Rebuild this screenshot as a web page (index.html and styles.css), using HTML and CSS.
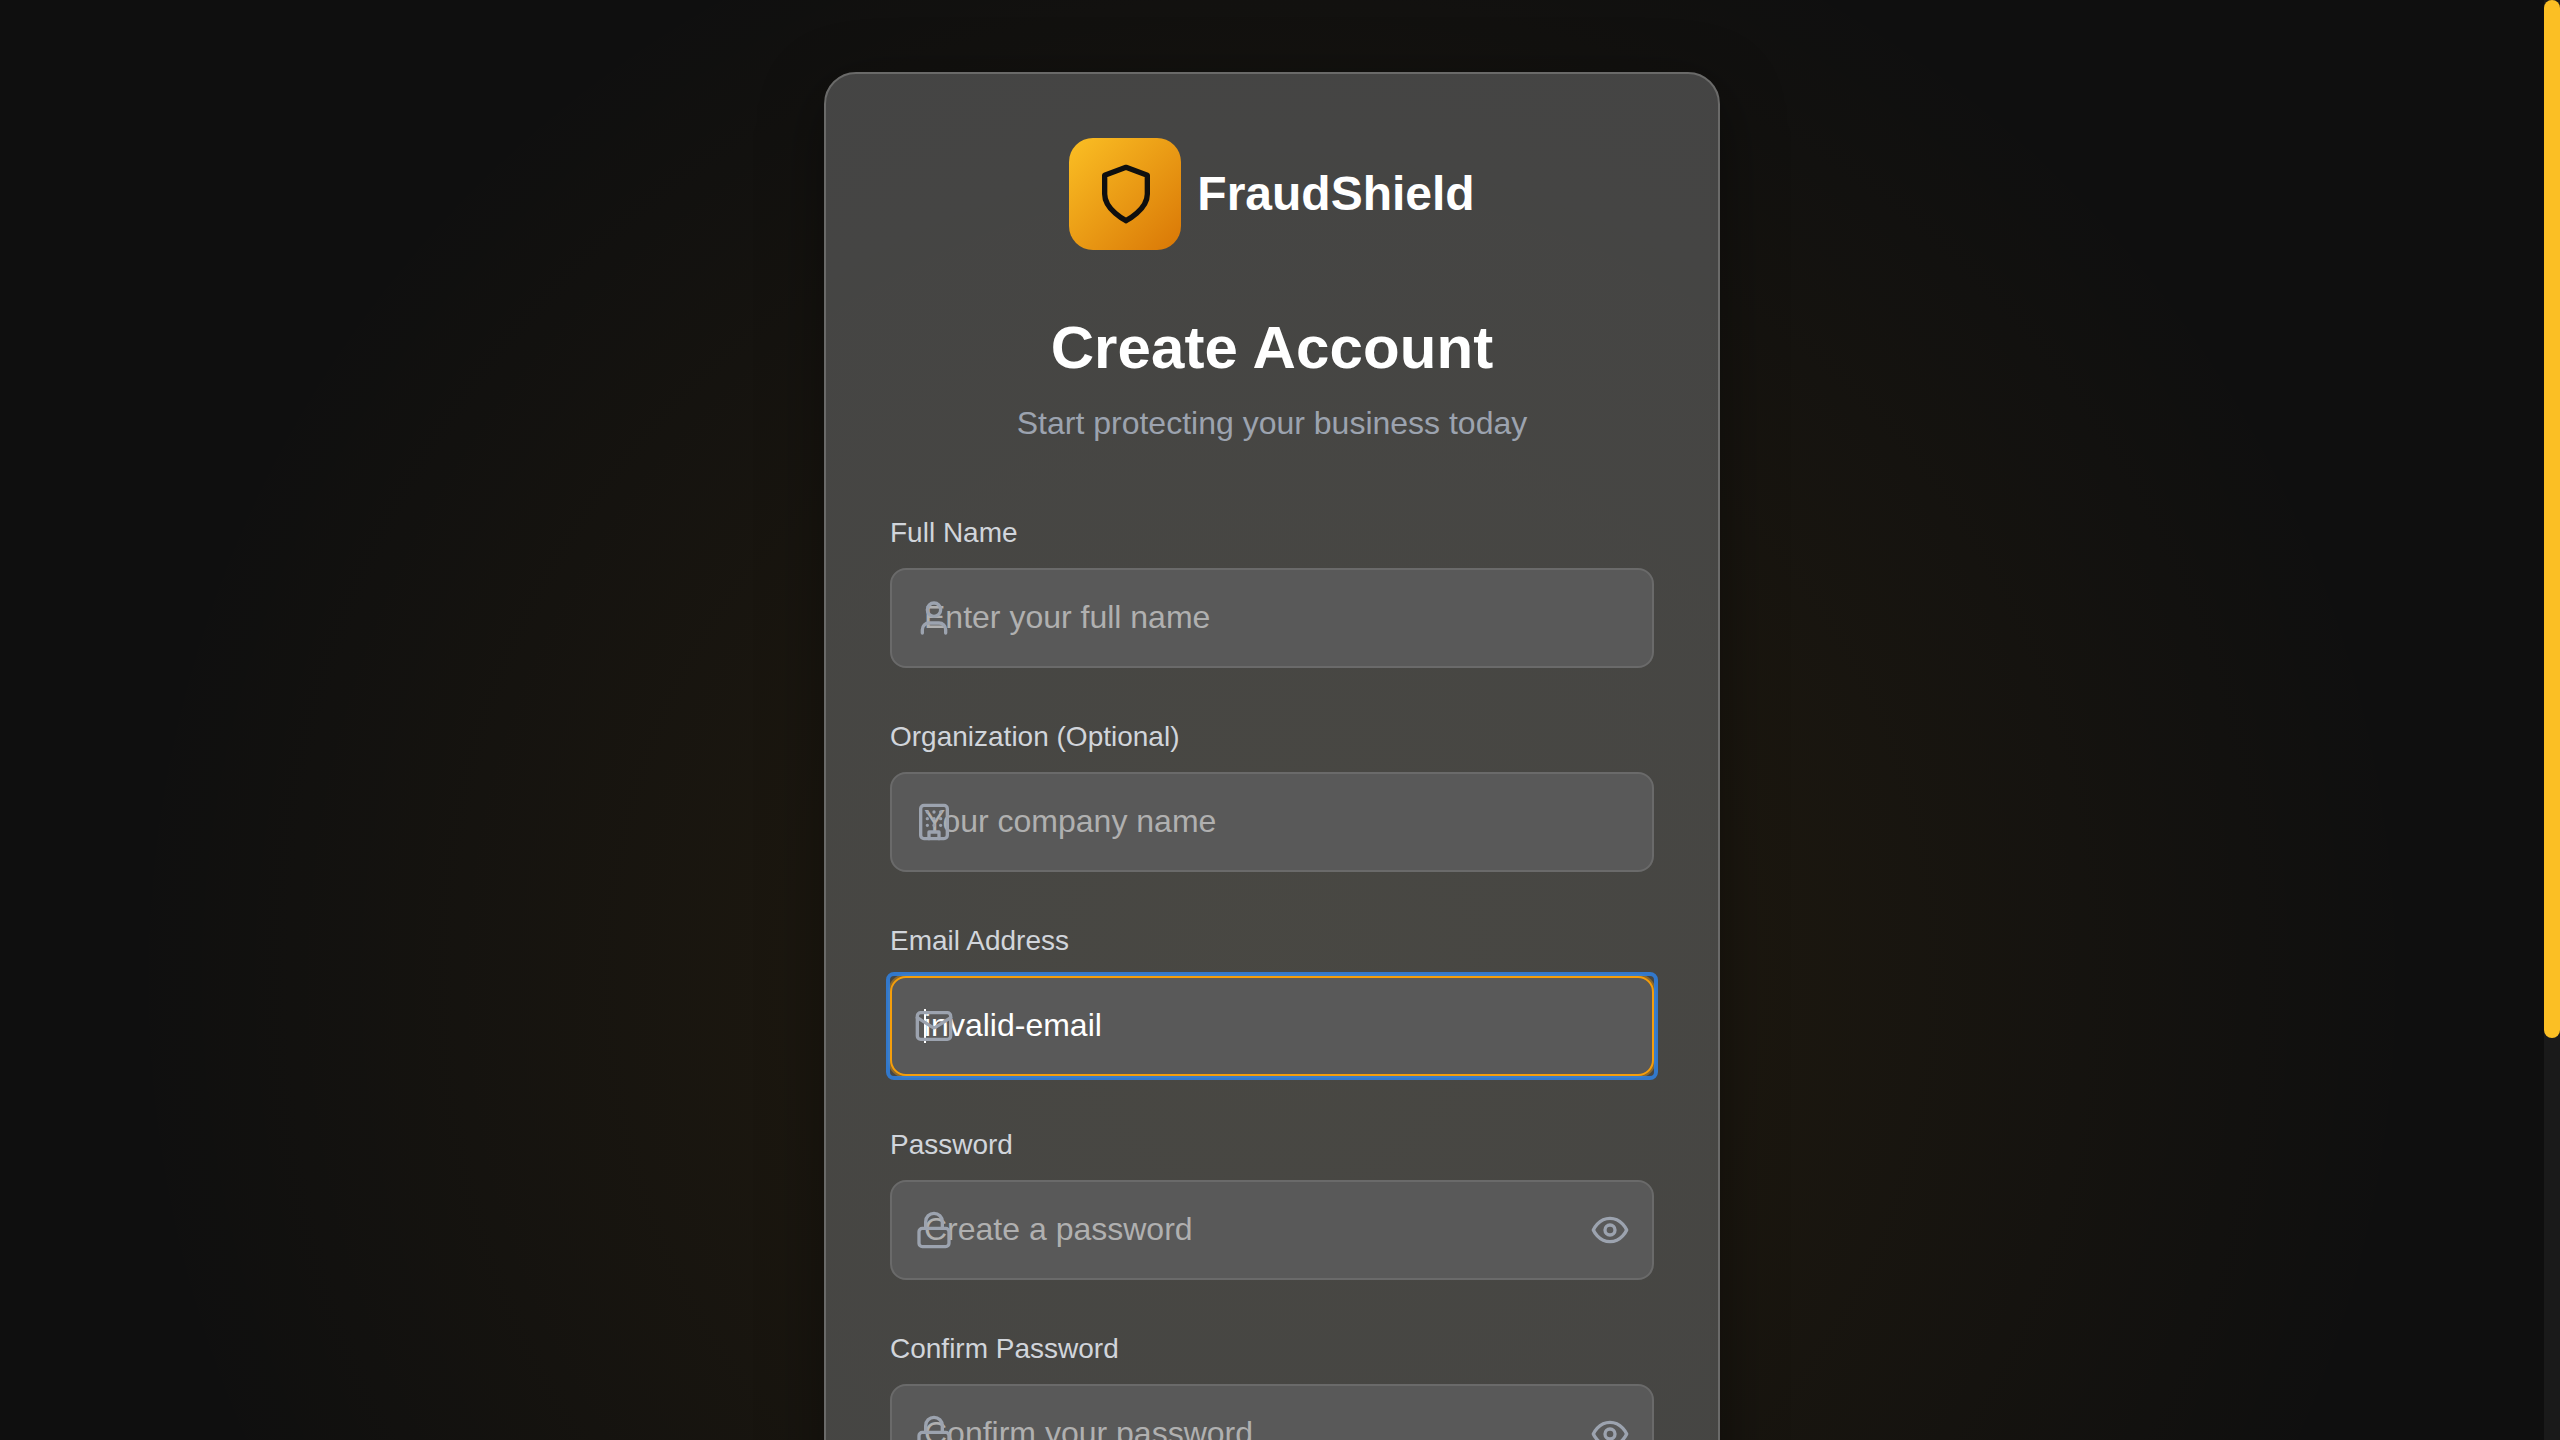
FILE: index.html
```html
<!DOCTYPE html>
<html lang="en">
<head>
<meta charset="utf-8">
<title>FraudShield – Create Account</title>
<link rel="stylesheet" href="styles.css">
</head>
<body>
<div class="viewport">
  <main class="page">
    <section class="card">
      <div class="brand">
        <div class="brand-mark">
          <svg class="brand-icon" viewBox="0 0 24 24"><path d="M12 22s8-4 8-10V5l-8-3-8 3v7c0 6 8 10 8 10"/></svg>
        </div>
        <span class="brand-name">FraudShield</span>
      </div>
      <h1 class="title">Create Account</h1>
      <p class="subtitle">Start protecting your business today</p>
      <form class="form">
        <div class="field">
          <label class="label">Full Name</label>
          <div class="control">
            <span class="placeholder">Enter your full name</span>
            <svg class="icon icon-left" viewBox="0 0 24 24"><path d="M19 21v-2a4 4 0 0 0-4-4H9a4 4 0 0 0-4 4v2"/><circle cx="12" cy="7" r="4"/></svg>
          </div>
        </div>
        <div class="field">
          <label class="label">Organization (Optional)</label>
          <div class="control">
            <span class="placeholder">Your company name</span>
            <svg class="icon icon-left" viewBox="0 0 24 24"><rect width="16" height="20" x="4" y="2" rx="2"/><path d="M9 22v-4h6v4M8 6h.01M16 6h.01M12 6h.01M12 10h.01M12 14h.01M16 10h.01M16 14h.01M8 10h.01M8 14h.01"/></svg>
          </div>
        </div>
        <div class="field">
          <label class="label">Email Address</label>
          <div class="control control-focused">
            <span class="caret"></span>
            <span class="value">invalid-email</span>
            <svg class="icon icon-left" viewBox="0 0 24 24"><rect width="20" height="16" x="2" y="4" rx="2"/><path d="m22 7-8.97 5.7a1.94 1.94 0 0 1-2.06 0L2 7"/></svg>
          </div>
        </div>
        <div class="field">
          <label class="label">Password</label>
          <div class="control">
            <span class="placeholder">Create a password</span>
            <svg class="icon icon-left" viewBox="0 0 24 24"><rect width="18" height="11" x="3" y="11" rx="2"/><path d="M7 11V7a5 5 0 0 1 10 0v4"/></svg>
            <svg class="icon icon-right" viewBox="0 0 24 24"><path d="M2 12s3-7 10-7 10 7 10 7-3 7-10 7-10-7-10-7Z"/><circle cx="12" cy="12" r="3"/></svg>
          </div>
        </div>
        <div class="field">
          <label class="label">Confirm Password</label>
          <div class="control">
            <span class="placeholder">Confirm your password</span>
            <svg class="icon icon-left" viewBox="0 0 24 24"><rect width="18" height="11" x="3" y="11" rx="2"/><path d="M7 11V7a5 5 0 0 1 10 0v4"/></svg>
            <svg class="icon icon-right" viewBox="0 0 24 24"><path d="M2 12s3-7 10-7 10 7 10 7-3 7-10 7-10-7-10-7Z"/><circle cx="12" cy="12" r="3"/></svg>
          </div>
        </div>
      </form>
    </section>
  </main>
  <div class="scrollbar"><div class="scroll-thumb"></div></div>
</div>
</body>
</html>
```
FILE: styles.css
```css
* { box-sizing: border-box; margin: 0; }

body {
  font-family: "Liberation Sans", Arial, sans-serif;
  background: #0f0f0f;
  overflow: hidden;
}

.viewport {
  display: flex;
  height: 1440px;
  overflow: hidden;
}

.page {
  flex: 1;
  display: flex;
  justify-content: center;
  align-items: flex-start;
  padding-top: 72px;
  background: radial-gradient(1150px 1150px at 50% 980px, rgba(245, 166, 20, 0.09), transparent) #0f0f0f;
}

.card {
  width: 896px;
  height: 1900px;
  padding: 64px;
  border: 2px solid #6a6a69;
  border-radius: 32px;
  background: radial-gradient(1130px 1130px at 50% 906px, rgba(235, 200, 20, 0.028), transparent) #444;
  box-shadow: 0 16px 64px rgba(0, 0, 0, 0.4);
}

.brand {
  display: flex;
  align-items: center;
  justify-content: center;
  gap: 16px;
}

.brand-mark {
  display: flex;
  align-items: center;
  justify-content: center;
  width: 112px;
  height: 112px;
  padding-left: 1px;
  border-radius: 24px;
  background: linear-gradient(135deg, #fbbf24, #d97706);
}

.brand-icon {
  width: 64px;
  height: 64px;
  fill: none;
  stroke: #0f0f0f;
  stroke-width: 2;
  stroke-linecap: round;
  stroke-linejoin: round;
}

.brand-name {
  color: #fff;
  font-size: 48px;
  font-weight: 700;
  line-height: 64px;
}

.title {
  margin-top: 62px;
  color: #fff;
  font-size: 60px;
  font-weight: 700;
  letter-spacing: 0.1px;
  line-height: 72px;
  text-align: center;
}

.subtitle {
  margin-top: 15px;
  color: #9ca3af;
  font-size: 32px;
  line-height: 48px;
  text-align: center;
}

.form {
  display: flex;
  flex-direction: column;
  gap: 49px;
  margin-top: 66px;
}

.field {
  display: flex;
  flex-direction: column;
  gap: 15px;
}

.label {
  color: #d1d5db;
  font-size: 28px;
  line-height: 40px;
}

.control {
  position: relative;
  display: flex;
  align-items: center;
  height: 100px;
  padding: 0 32px 2px;
  border: 2px solid #6a6a6a;
  border-radius: 16px;
  background: #595959;
  font-size: 32px;
  line-height: 36px;
}

.control-focused {
  border-color: #f59e0b;
  box-shadow: 0 0 0 2px rgba(245, 158, 11, 0.4);
}

/* Squared focus ring around the rounded control */
.control-focused::before {
  content: "";
  position: absolute;
  inset: -6px;
  border: 4px solid rgba(48, 128, 222, 0.88);
  border-radius: 8px;
}

.placeholder { color: #b0b0b0; }
.value { color: #fff; }

.caret {
  width: 2px;
  height: 34px;
  margin-top: 2px;
  margin-right: -2px;
  background: #fff;
}

.icon {
  position: absolute;
  top: 28px;
  width: 40px;
  height: 40px;
  fill: none;
  stroke: #9ca3af;
  stroke-width: 2;
  stroke-linecap: round;
  stroke-linejoin: round;
}

.icon-left { left: 22px; }
.icon-right { right: 22px; }

.scrollbar {
  width: 16px;
  background: #1a1a1a;
}

.scroll-thumb {
  height: 1038px;
  border-radius: 8px;
  background: #fbbf24;
}
```
